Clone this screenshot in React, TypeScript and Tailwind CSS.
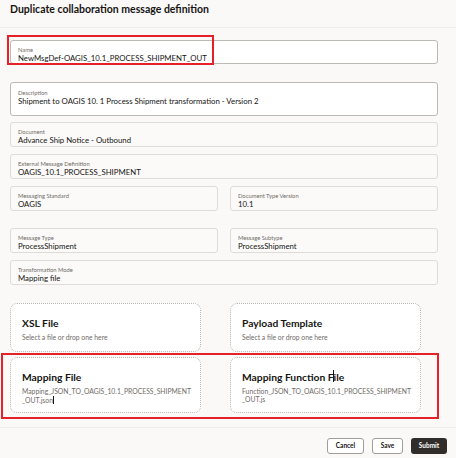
import React from "react";

const font = { fontFamily: "Lato, 'Noto Sans', sans-serif" };

function Field({
  label,
  value,
  className = "",
  editable = false,
}: {
  label: string;
  value: string;
  className?: string;
  editable?: boolean;
}) {
  return (
    <div
      className={
        "flex flex-col rounded-[3px] border px-[7px] pt-[5px] " +
        (editable
          ? "border-[#bcb9b5] bg-white "
          : "border-[#dedbd8] bg-[#fbfaf9] ") +
        className
      }
    >
      <span className="text-[5.8px] leading-[7px] text-[#6f6b67]">{label}</span>
      <span className="text-[7.8px] leading-[11px] text-[#161513] whitespace-nowrap">
        {value}
      </span>
    </div>
  );
}

function FileCard({
  title,
  children,
  className = "",
}: {
  title: React.ReactNode;
  children: React.ReactNode;
  className?: string;
}) {
  return (
    <div
      className={
        "flex flex-col rounded-[7px] border border-dotted border-[#b9b6b2] bg-white px-[11px] " +
        className
      }
    >
      <div className="text-[10.3px] font-bold leading-[14px] text-[#161513] whitespace-nowrap">{title}</div>
      <div className="mt-[3px] whitespace-nowrap text-[6.8px] leading-[8px] text-[#6f6b67]">{children}</div>
    </div>
  );
}

export default function App() {
  return (
    <div className="relative h-[458px] w-[456px] overflow-hidden bg-[#faf9f8]" style={font}>
      {/* Header */}
      <div className="flex h-[28px] items-start border-b border-[#eeecea] pl-[10px] pt-[2px]">
        <h1 className="text-[10.5px] font-bold leading-[14px] text-[#161513]">
          Duplicate collaboration message definition
        </h1>
      </div>

      {/* Form */}
      <div className="flex w-[438px] flex-col pl-[10px] pt-[12px]">
        <Field label="Name" value="NewMsgDef-OAGIS_10.1_PROCESS_SHIPMENT_OUT" editable className="h-[24px]" />
        <Field
          label="Description"
          value="Shipment to OAGIS 10. 1 Process Shipment transformation - Version 2"
          editable
          className="mt-[18px] h-[34px] pt-[6px]"
        />
        <Field label="Document" value="Advance Ship Notice - Outbound" className="mt-[6px] h-[25px]" />
        <Field
          label="External Message Definition"
          value="OAGIS_10.1_PROCESS_SHIPMENT"
          className="mt-[7px] h-[25px]"
        />
        <div className="mt-[7px] grid grid-cols-2 gap-x-[12px]">
          <Field label="Messaging Standard" value="OAGIS" className="h-[25px]" />
          <Field label="Document Type Version" value="10.1" className="h-[25px]" />
        </div>
        <div className="mt-[17px] grid grid-cols-2 gap-x-[12px]">
          <Field label="Message Type" value="ProcessShipment" className="h-[25px]" />
          <Field label="Message Subtype" value="ProcessShipment" className="h-[25px]" />
        </div>
        <Field label="Transformation Mode" value="Mapping file" className="mt-[7px] h-[25px]" />

        {/* File cards */}
        <div className="mt-[18px] grid grid-cols-[191px_191px] gap-x-[29px] gap-y-[5px]">
          <FileCard title="XSL File" className="h-[49px] pt-[12px]">
            Select a file or drop one here
          </FileCard>
          <FileCard title="Payload Template" className="h-[49px] pt-[12px]">
            Select a file or drop one here
          </FileCard>
          <FileCard title="Mapping File" className="h-[56px] pt-[12px]">
            Mapping_JSON_TO_OAGIS_10.1_PROCESS_SHIPMENT
            <br />
            _OUT.json
            <span className="ml-[0.5px] inline-block h-[8px] w-px translate-y-[1px] bg-[#161513]" />
          </FileCard>
          <FileCard
            title={
              <span>
                Mapping Function F
                <span className="relative">
                  <span className="absolute left-[-0.5px] top-[-1px] h-[12px] w-px bg-[#161513]" />
                </span>
                ile
              </span>
            }
            className="h-[56px] pt-[12px]"
          >
            Function_JSON_TO_OAGIS_10.1_PROCESS_SHIPMENT
            <br />
            _OUT.js
          </FileCard>
        </div>
      </div>

      {/* Footer */}
      <div className="mt-[14px] flex justify-end gap-[8px] border-t border-[#eeecea] pr-[9px] pt-[10px]">
        <button className="h-[16px] w-[37px] rounded-[3px] border border-[#a19d99] bg-white text-[6.5px] font-bold text-[#161513]">
          Cancel
        </button>
        <button className="h-[16px] w-[31px] rounded-[3px] border border-[#a19d99] bg-white text-[6.5px] font-bold text-[#161513]">
          Save
        </button>
        <button className="h-[16px] w-[36px] rounded-[3px] bg-[#312d2a] text-[6.5px] font-bold text-white">
          Submit
        </button>
      </div>

      {/* Red annotation boxes */}
      <div className="pointer-events-none absolute left-[7px] top-[35px] h-[30px] w-[207px] border-2 border-solid border-[color:#e62028]" />
      <div className="pointer-events-none absolute left-[1px] top-[353px] h-[66px] w-[438px] border-2 border-solid border-[color:#e62028]" />
    </div>
  );
}
